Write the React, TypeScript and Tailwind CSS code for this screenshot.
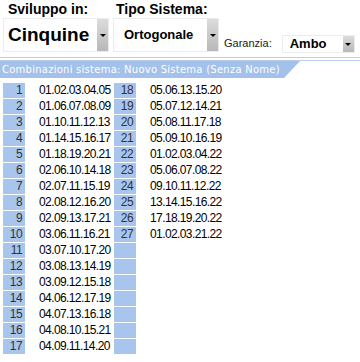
import React from 'react'

const left = [
  '01.02.03.04.05', '01.06.07.08.09', '01.10.11.12.13', '01.14.15.16.17',
  '01.18.19.20.21', '02.06.10.14.18', '02.07.11.15.19', '02.08.12.16.20',
  '02.09.13.17.21', '03.06.11.16.21', '03.07.10.17.20', '03.08.13.14.19',
  '03.09.12.15.18', '04.06.12.17.19', '04.07.13.16.18', '04.08.10.15.21',
  '04.09.11.14.20',
]

const right = [
  '05.06.13.15.20', '05.07.12.14.21', '05.08.11.17.18', '05.09.10.16.19',
  '01.02.03.04.22', '05.06.07.08.22', '09.10.11.12.22', '13.14.15.16.22',
  '17.18.19.20.22', '01.02.03.21.22',
]

function Arrow({ className }: { className: string }) {
  return (
    <div className={`flex items-center justify-center bg-gradient-to-b from-[#dcdcdc] to-[#b8b8b8] ${className}`}>
      <div className="w-0 h-0 border-l-[3px] border-r-[3px] border-t-[3px] border-l-transparent border-r-transparent border-t-black" />
    </div>
  )
}

export default function App() {
  return (
    <div className="w-[360px] h-[362px] bg-white font-['Liberation_Sans',Arial,sans-serif] text-black overflow-hidden">
      <div className="flex h-[57px]">
        <div className="ml-[3px] w-[106px]">
          <div className="h-[18px] pl-[5px] pt-[1px] text-[14px] font-bold leading-[16px]">Sviluppo in:</div>
          <div className="flex h-[34px] border border-[#ececec]">
            <div className="flex-1 flex items-center pl-[4px] text-[19px] font-bold">Cinquine</div>
            <Arrow className="w-[11px]" />
          </div>
        </div>
        <div className="ml-[4px] w-[106px]">
          <div className="h-[18px] pl-[3px] pt-[1px] text-[14px] font-bold leading-[16px]">Tipo Sistema:</div>
          <div className="flex h-[34px] border border-[#ececec]">
            <div className="flex-1 flex items-center pl-[10px] text-[13px] font-bold">Ortogonale</div>
            <Arrow className="w-[11px]" />
          </div>
        </div>
        <div className="ml-[5px] pt-[37px] text-[11px] leading-[13px] text-[#222]">Garanzia:</div>
        <div className="ml-[10px] mt-[35px] w-[73px] h-[18px] flex border border-[#ececec]">
          <div className="flex-1 flex items-center pl-[7px] text-[13px] font-bold">Ambo</div>
          <Arrow className="w-[11px]" />
        </div>
      </div>
      <div className="h-px bg-[#b8cff0]" />
      <div className="h-[2px]" />
      <div className="h-px bg-[#b8cff0]" />
      <div className="relative h-[17px]">
        <div className="absolute inset-0 bg-[#a3c1eb] [clip-path:polygon(0_0,300px_0,284px_100%,0_100%)]" />
        <div className="relative pl-[2px] font-['DejaVu_Sans',Verdana,sans-serif] text-[10px] leading-[17px] text-white tracking-[0.25px]">
          Combinazioni sistema: Nuovo Sistema (Senza Nome)
        </div>
      </div>
      <div className="flex mt-[5px] text-[12px] leading-[15px] tracking-[-0.6px]">
        <div className="flex flex-col gap-px ml-[3px]">
          {left.map((v, i) => (
            <div key={i} className="flex h-[15px]">
              <div className="w-[22px] bg-[#a8c5ee] text-right pr-[3px] text-[#333]">{i + 1}</div>
              <div className="w-[89px] pl-[14px]">{v}</div>
            </div>
          ))}
        </div>
        <div className="flex flex-col gap-px">
          {left.map((_, i) => (
            <div key={i} className="flex h-[15px]">
              <div className="w-[22px] bg-[#a8c5ee] text-right pr-[3px] text-[#333]">{right[i] ? i + 18 : ''}</div>
              <div className="pl-[14px]">{right[i] || ''}</div>
            </div>
          ))}
        </div>
      </div>
    </div>
  )
}
